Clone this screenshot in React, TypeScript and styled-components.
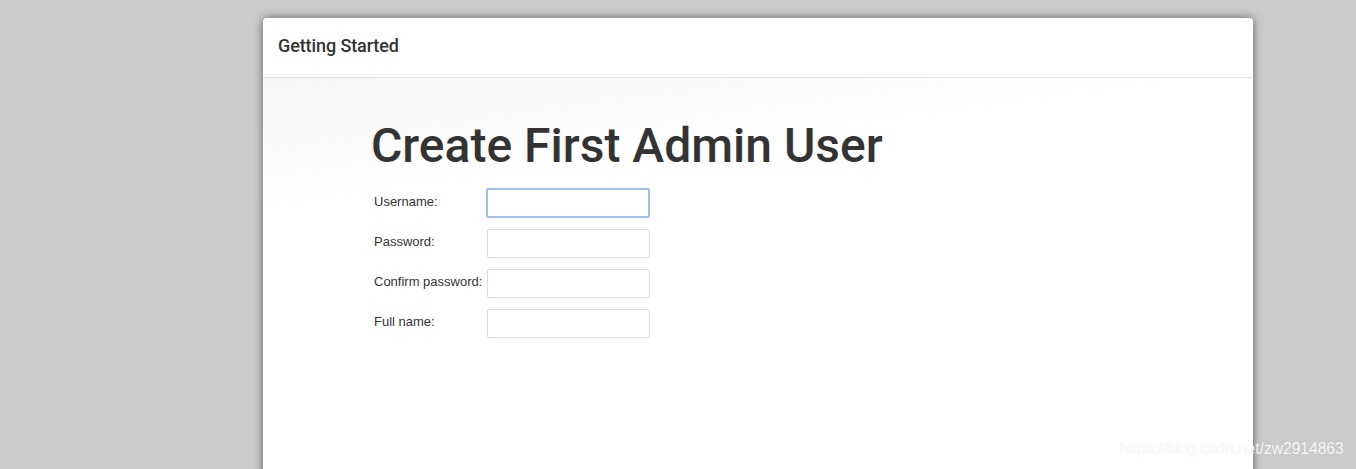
import React from "react";
import styled, { createGlobalStyle } from "styled-components";

const Global = createGlobalStyle`
  html, body { margin: 0; padding: 0; background: #cccccc; }
  body { overflow: hidden; }
`;

const Page = styled.div`
  position: relative;
  width: 1356px;
  height: 469px;
  overflow: hidden;
  background: #cccccc;
  padding: 18px 0 0 263px;
  box-sizing: border-box;
`;

const Dialog = styled.div`
  width: 990px;
  height: 520px;
  background: #ffffff;
  border-radius: 4px 4px 0 0;
  box-shadow: 0 0 10px rgba(0, 0, 0, 0.55);
  display: flex;
  flex-direction: column;
  overflow: hidden;
`;

const Header = styled.div`
  height: 60px;
  flex: none;
  display: flex;
  align-items: center;
  padding: 0 15px 5px;
  border-bottom: 1px solid #e3e3e3;
  box-sizing: border-box;
  background: #fff;
`;

const HeaderTitle = styled.h4`
  margin: 0;
  font-family: Roboto, "Liberation Sans", sans-serif;
  font-size: 18px;
  font-weight: 500;
  letter-spacing: -0.1px;
  color: #333;
`;

const Body = styled.div`
  flex: 1;
  background: linear-gradient(172deg, #f6f6f6 0%, #ffffff 22%, #ffffff 100%);
  padding: 36px 0 0 108px;
`;

const Heading = styled.h1`
  margin: 0 0 11px;
  font-family: Roboto, "Liberation Sans", sans-serif;
  font-size: 48px;
  font-weight: 500;
  line-height: 64px;
  color: #333;
`;

const Form = styled.div`
  display: flex;
  flex-direction: column;
  gap: 11px;
  padding-left: 3px;
`;

const Row = styled.div`
  display: flex;
  align-items: center;
  height: 29px;
`;

const Label = styled.label`
  width: 113px;
  flex: none;
  font-family: "Liberation Sans", Arial, sans-serif;
  font-size: 13px;
  color: #333;
  margin-top: -5px;
`;

const Input = styled.input<{ $focused?: boolean }>`
  width: 163px;
  height: 29px;
  box-sizing: border-box;
  border: 1px solid #dcdcdc;
  border-radius: 2px;
  background: #fff;
  outline: none;
  padding: 4px 6px;
  font-family: "Liberation Sans", Arial, sans-serif;
  font-size: 13px;
  ${(p) =>
    p.$focused
      ? `border: 2px solid #a0befa; width: 164px; margin-left: -1px; height: 30px; margin-top: -1px;`
      : ""}
`;

const Watermark = styled.div`
  position: absolute;
  left: 1120px;
  top: 440px;
  font-family: "Liberation Sans", Arial, sans-serif;
  font-size: 15.6px;
  color: rgba(255, 255, 255, 0.92);
  text-shadow: 0 0 1px rgba(0, 0, 0, 0.12);
`;

const fields = [
  { label: "Username:", focused: true },
  { label: "Password:", type: "password" },
  { label: "Confirm password:", type: "password" },
  { label: "Full name:" },
];

export default function App() {
  return (
    <>
      <Global />
      <Page>
        <Dialog>
          <Header>
            <HeaderTitle>Getting Started</HeaderTitle>
          </Header>
          <Body>
            <Heading>Create First Admin User</Heading>
            <Form>
              {fields.map((f) => (
                <Row key={f.label}>
                  <Label>{f.label}</Label>
                  <Input type={f.type || "text"} $focused={f.focused} />
                </Row>
              ))}
            </Form>
          </Body>
        </Dialog>
        <Watermark>https://blog.csdn.net/zw2914863</Watermark>
      </Page>
    </>
  );
}
